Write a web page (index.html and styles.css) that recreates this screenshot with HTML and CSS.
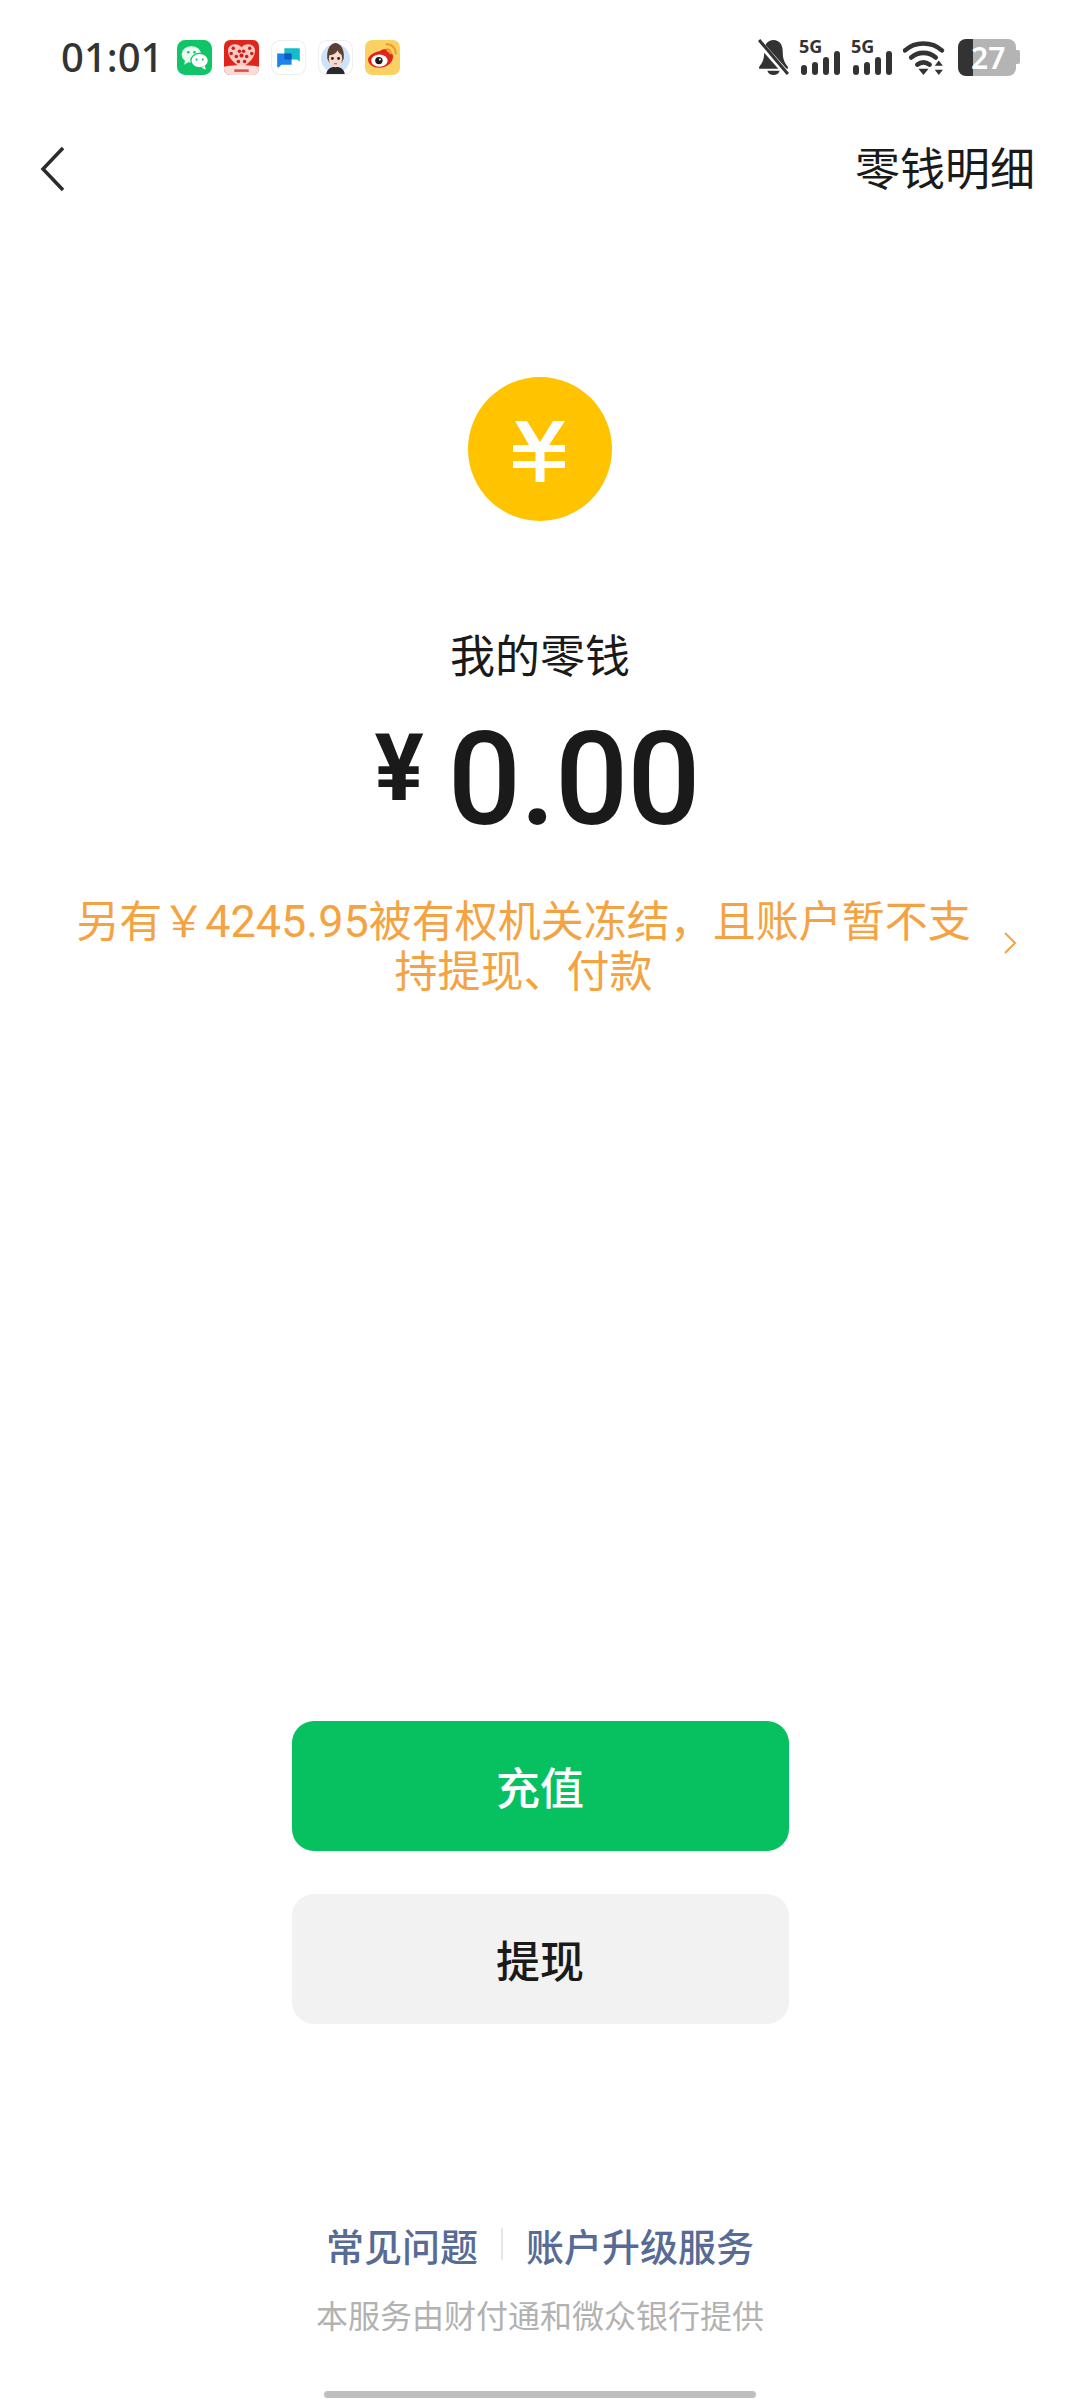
FILE: index.html
```html
<!DOCTYPE html>
<html lang="zh-CN">
<head>
<meta charset="UTF-8" />
<meta name="viewport" content="width=device-width, initial-scale=1" />
<title>我的零钱</title>
<link rel="stylesheet" href="styles.css">
</head>
<body>
<div class="page">

  <!-- Status bar -->
  <div class="status">
    <span class="time">01:01</span>
    <div class="apps">
      <svg class="app" viewBox="0 0 34 34">
        <rect width="34" height="34" rx="8" fill="#0fc568"/>
        <ellipse cx="14" cy="14" rx="9.500" ry="8" fill="#e9fbf1"/>
        <path d="M8 19l-1 5 5-3z" fill="#e9fbf1"/>
        <ellipse cx="22" cy="20" rx="8.500" ry="7" fill="#fff" stroke="#0fc568" stroke-width="1.200"/>
        <path d="M27 25l1 4-4-2z" fill="#fff"/>
        <circle cx="11" cy="12" r="1.200" fill="#0fc568"/><circle cx="17" cy="12" r="1.200" fill="#0fc568"/>
        <circle cx="19" cy="19" r="1.100" fill="#0fc568"/><circle cx="25" cy="19" r="1.100" fill="#0fc568"/>
      </svg>
      <svg class="app" viewBox="0 0 34 34">
        <rect width="34" height="34" rx="6" fill="#e0261c"/>
        <path d="M17 27C8 22 3 15 4 9c1-5 9-7 13-2 4-5 12-3 13 2 1 6-4 13-13 18z" fill="#f7c9c0"/>
        <g fill="#c9201a">
          <circle cx="9" cy="8" r="1.700"/><circle cx="15" cy="11" r="1.700"/><circle cx="25" cy="8" r="1.700"/><circle cx="19" cy="11" r="1.700"/>
          <circle cx="7" cy="13" r="1.700"/><circle cx="12" cy="16" r="1.700"/><circle cx="27" cy="13" r="1.700"/><circle cx="22" cy="16" r="1.700"/>
          <circle cx="17" cy="15" r="2"/><circle cx="14" cy="21" r="1.700"/><circle cx="20" cy="21" r="1.700"/>
        </g>
        <path d="M0 26c6-2 28-2 34 0v2a6 6 0 0 1-6 6H6a6 6 0 0 1-6-6z" fill="#fbdcd6"/>
        <rect x="10" y="28.500" width="14" height="2.500" fill="#d8524a"/>
      </svg>
      <svg class="app" viewBox="0 0 34 34">
        <rect x=".5" y=".5" width="33" height="33" rx="8" fill="#fff" stroke="#eee"/>
        <path d="M13 8h14a1 1 0 0 1 1 1v12l-3-2H13z" fill="#15bccb"/>
        <path d="M6 13h13a1 1 0 0 1 1 1v10H10l-3 3-1-1z" fill="#1b82ee"/>
        <rect x="13" y="13" width="7" height="6" rx="1" fill="#1259b8"/>
      </svg>
      <svg class="app" viewBox="0 0 34 34">
        <rect x=".5" y=".5" width="33" height="33" rx="8" fill="#fff" stroke="#eee"/>
        <circle cx="17" cy="18" r="14" fill="#cfe2f8"/>
        <path d="M8 33c1-6 6-7 9-7s8 1 9 7z" fill="#2a2a2e"/>
        <path d="M9 18C8 8 13 3 17 3s9 5 8 15l-2 4H11z" fill="#5a4038"/>
        <ellipse cx="17" cy="18" rx="6.500" ry="8.500" fill="#f8d9cb"/>
        <path d="M10 15c4 0 8-2 9-5 1 3 3 4 5 5-1-6-3-8-7-8s-7 2-7 8z" fill="#5a4038"/>
        <circle cx="14" cy="18" r="1.400" fill="#33231f"/><circle cx="20" cy="18" r="1.400" fill="#33231f"/>
        <path d="M15.500 23h3" stroke="#d3665f" stroke-width="1.200"/>
      </svg>
      <svg class="app" viewBox="0 0 34 34">
        <rect width="34" height="34" rx="7" fill="#fbd164"/>
        <path d="M14 11c5-3 8-3 8 1 4 0 6 2 5 6-1 5-7 9-13 9S3 24 3 19c0-3 5-7 11-8z" fill="#e2231a"/>
        <ellipse cx="14" cy="20" rx="8" ry="6" fill="#fff"/>
        <circle cx="13.500" cy="20" r="3.600" fill="#1c1c1c"/>
        <circle cx="14.500" cy="19" r="1" fill="#fff"/>
        <path d="M21 4c5 0 9 4 9 9M21 9c2.500 0 4 1.500 4 4" fill="none" stroke="#ef9a2b" stroke-width="2.200" stroke-linecap="round"/>
      </svg>
    </div>
    <div class="sys">
      <svg class="bell" viewBox="0 0 32 38">
        <path d="M16 2c-6 0-9 5-9 11 0 6-1 11-5 15v2h28v-2c-4-4-5-9-5-15 0-6-3-11-9-11z" fill="#333"/>
        <path d="M10 32c1 3 3 4 6 4s5-1 6-4z" fill="#333"/>
        <path d="M0 2l30 34" stroke="#fff" stroke-width="6"/>
        <path d="M2 2l28 33" stroke="#333" stroke-width="3"/>
      </svg>
      <div class="sim">
        <span class="net">5G</span>
        <div class="bars"><i class="b1"></i><i class="b2"></i><i class="b3"></i><i class="b4"></i></div>
      </div>
      <div class="sim">
        <span class="net">5G</span>
        <div class="bars"><i class="b1"></i><i class="b2"></i><i class="b3"></i><i class="b4"></i></div>
      </div>
      <svg class="wifi" viewBox="0 0 44 36">
        <path d="M2 11c10-9 26-9 36 0" fill="none" stroke="#333" stroke-width="4.500" stroke-linecap="round"/>
        <path d="M8 18c7-6 17-6 24 0" fill="none" stroke="#333" stroke-width="4.500" stroke-linecap="round"/>
        <path d="M14 25c4-3 8-3 12 0" fill="none" stroke="#333" stroke-width="4.500" stroke-linecap="round"/>
        <path d="M15 29h10l-5 6z" fill="#333"/>
        <path d="M35 21l-4 5h8zM35 35l-4-5h8z" fill="#333"/>
      </svg>
      <div class="battery">
        <div class="batt-level"></div>
        <div class="batt-rest">27</div>
        <div class="batt-tip"></div>
      </div>
    </div>
  </div>

  <!-- Nav -->
  <div class="nav">
    <svg class="back" viewBox="0 0 26 46">
      <path d="M23 2L3 23l20 21" fill="none" stroke="#2b2b2b" stroke-width="3.500"/>
    </svg>
    <span class="nav-link">零钱明细</span>
  </div>

  <!-- Balance -->
  <svg class="coin" viewBox="0 0 144 144">
    <circle cx="72" cy="72" r="72" fill="#ffc300"/>
    <path d="M47 44h12l13 21 13-21h12L81 68h16v7H76.500v9H97v7H76.500v14h-9V91H45v-7h22.500v-9H45v-7h16z" fill="#fff"/>
  </svg>
  <div class="label">我的零钱</div>
  <div class="amount"><span class="yen">¥</span><span class="digits">0.00</span></div>

  <div class="notice">
    <p class="notice-text">另有&#xFFE5;<span class="num">4245.95</span>被有权机关冻结&#xFF0C;且账户暂不支持提现、付款</p>
    <svg class="notice-arrow" viewBox="0 0 14 24">
      <path d="M2 2l10 10L2 22" fill="none" stroke="#f5a342" stroke-width="2"/>
    </svg>
  </div>

  <!-- Buttons -->
  <div class="actions">
    <button class="btn btn-green">充值</button>
    <button class="btn btn-gray">提现</button>
  </div>

  <!-- Footer -->
  <div class="links">
    <span>常见问题</span>
    <i class="sep"></i>
    <span>账户升级服务</span>
  </div>
  <div class="provider">本服务由财付通和微众银行提供</div>
  <div class="home-bar"></div>

</div>
</body>
</html>
```

FILE: styles.css
```css
* {
  box-sizing: border-box;
}
body {
  margin: 0;
  background: #fff;
  font-family: "Noto Sans CJK SC", "Noto Sans", sans-serif;
  color: #1a1a1a;
}
.page {
  width: 1080px;
  height: 2400px;
  overflow: hidden;
  display: flex;
  flex-direction: column;
  align-items: center;
}
.page > * {
  flex: none;
}

/* Status bar */
.status {
  width: 100%;
  height: 114px;
  padding: 0 60px 0 61px;
  display: flex;
  align-items: center;
}
.time {
  font-family: "Noto Sans", sans-serif;
  font-size: 40px;
  font-weight: 500;
  color: #333;
  line-height: 1;
}
.apps {
  display: flex;
  gap: 12px;
  margin-left: 14px;
}
.app {
  width: 35px;
  height: 35px;
  display: block;
}
.sys {
  margin-left: auto;
  display: flex;
  align-items: center;
}
.bell {
  width: 33px;
  height: 39px;
  margin-right: 9px;
}
.sim {
  width: 41px;
  height: 35px;
  margin-right: 11px;
  position: relative;
}
.net {
  display: block;
  font-family: "Noto Sans", sans-serif;
  font-size: 18px;
  font-weight: 700;
  line-height: 13px;
  color: #333;
}
.bars {
  position: absolute;
  right: 0;
  bottom: 0;
  display: flex;
  align-items: flex-end;
  gap: 5px;
}
.bars i {
  width: 6px;
  background: #333;
  border-radius: 3px;
}
.b1 { height: 10px; }
.b2 { height: 13px; }
.b3 { height: 18px; }
.b4 { height: 24px; }
.wifi {
  width: 45px;
  height: 37px;
}
.battery {
  margin-left: 10px;
  display: flex;
  align-items: center;
}
.batt-level {
  width: 15px;
  height: 37px;
  background: #333;
  border-radius: 8px 0 0 8px;
}
.batt-rest {
  width: 43px;
  height: 37px;
  background: #b4b4b4;
  border-radius: 0 8px 8px 0;
  font-family: "Noto Sans", sans-serif;
  font-size: 30px;
  font-weight: 600;
  line-height: 37px;
  color: #fff;
  text-indent: -2px;
}
.batt-tip {
  width: 4px;
  height: 14px;
  background: #b4b4b4;
  border-radius: 0 2px 2px 0;
}

/* Nav */
.nav {
  width: 100%;
  height: 106px;
  padding: 0 45px 0 40px;
  display: flex;
  align-items: center;
  justify-content: space-between;
}
.back {
  width: 26px;
  height: 46px;
  margin-top: 4px;
}
.nav-link {
  font-size: 45px;
  line-height: 60px;
  color: #1a1a1a;
}

/* Balance */
.coin {
  width: 144px;
  height: 144px;
  margin-top: 157px;
}
.label {
  margin-top: 103px;
  font-size: 45px;
  line-height: 60px;
}
.amount {
  margin-top: 26px;
  height: 140px;
  padding-right: 6px;
  display: flex;
  align-items: center;
  font-family: Roboto, sans-serif;
  line-height: 140px;
}
.yen {
  font-size: 92px;
  font-weight: 700;
  margin-right: 24px;
  margin-top: -22px;
}
.digits {
  font-size: 129px;
  font-weight: 500;
  letter-spacing: -1px;
}

.notice {
  width: 100%;
  margin-top: 43px;
  padding-left: 71px;
  display: flex;
  align-items: center;
}
.notice-text {
  width: 905px;
  margin: 0;
  font-size: 43px;
  line-height: 50px;
  text-align: center;
  color: #f5a342;
}
.num {
  font-family: Roboto, sans-serif;
  font-size: 45px;
  line-height: 0;
}
.notice-arrow {
  width: 14px;
  height: 24px;
  margin-left: 27px;
}

/* Buttons */
.actions {
  margin-top: 728px;
  display: flex;
  flex-direction: column;
  gap: 43px;
}
.btn {
  width: 497px;
  height: 130px;
  border: none;
  border-radius: 22px;
  font-family: inherit;
  font-size: 44px;
  font-weight: 500;
}
.btn-green {
  background: #07c160;
  color: #fff;
}
.btn-gray {
  background: #f2f2f2;
  color: #1a1a1a;
}

/* Footer */
.links {
  margin-top: 195px;
  height: 50px;
  display: flex;
  align-items: center;
  font-size: 38px;
  font-weight: 500;
  color: #576b95;
}
.sep {
  width: 2px;
  height: 32px;
  margin: 0 23px;
  background: #e5e5e5;
}
.provider {
  margin-top: 25px;
  font-size: 32px;
  line-height: 40px;
  color: #b2b2b2;
}
.home-bar {
  width: 432px;
  height: 7px;
  margin-top: 57px;
  background: #bfbfbf;
  border-radius: 4px;
}
```
